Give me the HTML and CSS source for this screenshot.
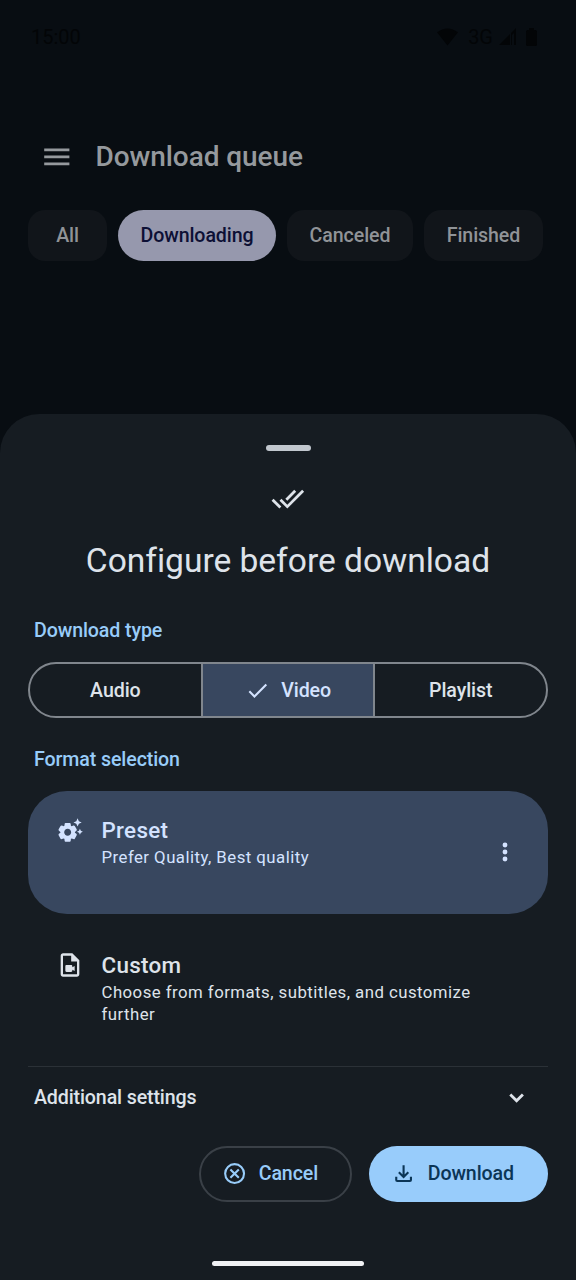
FILE: index.html
```html
<!DOCTYPE html>
<html lang="en">
<head>
<meta charset="utf-8">
<title>Download queue</title>
<link rel="stylesheet" href="styles.css">
</head>
<body>
<div class="screen">
  <div class="backdrop">
    <div class="status">
      <span>15:00</span>
      <div class="status-icons">
        <svg class="wifi" viewBox="0 0 22 18"><path d="M0 4Q11-4 22 4L11 18z"/></svg>
        <span class="network">3G</span>
        <svg class="signal" viewBox="0 0 17 17"><path d="M0 17 11 6v11zM12 5l5-5v17h-2V5l-2 2v10h-1z"/></svg>
        <svg class="battery" viewBox="0 0 11 18"><path d="M3 0h5v2h1.500Q11 2 11 3.500v13Q11 18 9.500 18h-8Q0 18 0 16.500v-13Q0 2 1.500 2H3z"/></svg>
      </div>
    </div>
    <header class="appbar">
      <svg class="icon24" viewBox="0 0 24 24"><path d="M3 18h18v-2H3v2zm0-5h18v-2H3v2zm0-7v2h18V6H3z"/></svg>
      <h1>Download queue</h1>
    </header>
    <nav class="chips">
      <span class="chip chip-all">All</span>
      <span class="chip chip-downloading selected">Downloading</span>
      <span class="chip chip-canceled">Canceled</span>
      <span class="chip chip-finished">Finished</span>
    </nav>
  </div>
  <main class="sheet">
    <div class="handle"></div>
    <svg class="icon24 done" viewBox="0 0 24 24"><path d="m18 7-1.410-1.410-6.340 6.340 1.410 1.410L18 7zm4.240-1.410L11.660 16.170 7.480 12l-1.410 1.410L11.660 19l12-12-1.420-1.410zM.41 13.410 6 19l1.410-1.410L1.830 12 .41 13.410z"/></svg>
    <h2>Configure before download</h2>
    <h3 class="label-type">Download type</h3>
    <div class="segments">
      <div class="segment">Audio</div>
      <div class="segment active"><svg class="icon18" viewBox="0 0 24 24"><path d="M9 16.170 4.830 12l-1.420 1.410L9 19 21 7l-1.410-1.410z"/></svg><span>Video</span></div>
      <div class="segment">Playlist</div>
    </div>
    <h3 class="label-format">Format selection</h3>
    <section class="option preset">
      <svg class="icon20" viewBox="0 0 24 24"><path d="M17.410 6.590 15 5.500l2.410-1.090L18.500 2l1.090 2.410L22 5.500l-2.410 1.090L18.500 9zM21.280 12.720 20.500 11l-.78 1.720-1.720.78 1.720.78.78 1.720.78-1.720L23 13.500zM16.240 14.370l1.230.93c.4.3.51.86.26 1.300l-1.620 2.800c-.25.44-.79.62-1.250.42l-1.430-.6c-.2.13-.42.26-.64.37l-.19 1.540c-.06.5-.49.88-.99.88H8.380c-.5 0-.93-.38-.99-.88l-.19-1.540c-.22-.11-.43-.23-.64-.37l-1.430.6c-.46.2-1 .02-1.250-.42l-1.620-2.800c-.25-.44-.14-.99.26-1.300l1.230-.93V14c0-.12 0-.25.01-.37L2.530 12.700c-.4-.3-.51-.86-.26-1.300l1.620-2.800c.25-.44.79-.62 1.250-.42l1.430.6c.2-.13.42-.26.64-.37l.19-1.540C7.450 6.380 7.880 6 8.380 6h3.230c.5 0 .93.38.99.88l.19 1.540c.22.11.43.23.64.37l1.430-.6c.46-.2 1-.02 1.250.42l1.620 2.800c.25.44.14.99-.26 1.300l-1.230.93c.01.12.01.24.01.37s0 .24-.01.36zM13 14c0-1.660-1.340-3-3-3s-3 1.340-3 3 1.340 3 3 3 3-1.340 3-3z"/></svg>
      <div class="option-text"><h4>Preset</h4><p>Prefer Quality, Best quality</p></div>
      <svg class="icon20 more" viewBox="0 0 24 24"><circle cx="12" cy="6" r="2.100"/><circle cx="12" cy="12" r="2.100"/><circle cx="12" cy="18" r="2.100"/></svg>
    </section>
    <section class="option custom">
      <svg class="icon20" viewBox="0 0 24 24"><path d="M14 2H6.010c-1.100 0-2 .89-2 2L4 20c0 1.110.89 2 1.990 2H18c1.100 0 2-.9 2-2V8l-6-6zM6 4h7v5h5v11H6V4zm8 10 2-1.060v4.120L14 16v1c0 .55-.45 1-1 1H9c-.55 0-1-.45-1-1v-4c0-.55.45-1 1-1h4c.55 0 1 .45 1 1v1z"/></svg>
      <div class="option-text"><h4>Custom</h4><p>Choose from formats, subtitles, and customize further</p></div>
    </section>
    <div class="additional">
      <span>Additional settings</span>
      <svg class="icon18" viewBox="0 0 24 24"><path class="stroke" d="m6 9 6 6 6-6"/></svg>
    </div>
    <div class="actions">
      <button class="cancel"><svg class="icon18" viewBox="0 0 24 24"><circle class="thin" cx="12" cy="12" r="9"/><path class="thin" d="m8 8 8 8m0-8-8 8"/></svg><span>Cancel</span></button>
      <button class="download"><svg class="icon18" viewBox="0 0 24 24"><path class="thin" d="M12 4v11M7.500 10.700 12 15.200l4.500-4.500M5 15v3q0 1 1 1h12q1 0 1-1v-3"/></svg><span>Download</span></button>
    </div>
    <div class="homebar"></div>
  </main>
</div>
</body>
</html>
```
FILE: styles.css
```css
* { box-sizing: border-box; margin: 0; }
body { background: #080d12; font-family: Roboto, sans-serif; }
svg { display: block; fill: currentColor; flex: none; }
h1, h2, h3, h4, p { font-weight: 400; }
.screen { width: 576px; height: 1280px; overflow: hidden; display: flex; flex-direction: column; }
.backdrop { height: 414px; flex: none; }
.status { display: flex; justify-content: space-between; align-items: center; height: 73px; padding: 0 39px 0 31px; color: #030507; font-size: 20px; font-weight: 400; }
.status-icons { display: flex; align-items: center; }
.network { margin: 0 6px 0 10px; }
.wifi { width: 21px; height: 18px; }
.signal { width: 17px; height: 17px; }
.battery { width: 11px; height: 18px; margin-left: 10px; }
.appbar { display: flex; align-items: center; height: 50px; margin: 59px 0 28px; padding: 0 39.500px; gap: 22.500px; color: #95999d; }
.appbar h1 { font-size: 28px; font-weight: 500; line-height: 40px; letter-spacing: -.08px; }
.icon24 { width: 33.600px; height: 33.600px; }
.icon20 { width: 28px; height: 28px; }
.icon18 { width: 25.200px; height: 25.200px; }
.chips { display: flex; gap: 11px; padding-left: 28px; }
.chip { display: flex; align-items: center; justify-content: center; height: 51px; border-radius: 17px; background: #11151a; color: #909397; font-size: 19.600px; font-weight: 500; letter-spacing: -.09px; }
.chip.selected { background: #9698ad; color: #0d1035; border-radius: 26px; }
.chip-all { width: 79px; }
.chip-downloading { width: 158px; }
.chip-canceled { width: 126px; }
.chip-finished { width: 119px; }
.sheet { display: flex; flex-direction: column; flex: 1; padding: 31px 28px 0; background: #161c22; border-radius: 39px 39px 0 0; color: #dee3ea; }
.handle { width: 45px; height: 6px; border-radius: 3px; background: #c1c7ce; align-self: center; flex: none; }
.done { align-self: center; margin-top: 31px; }
h2 { font-size: 33.600px; line-height: 45px; text-align: center; margin-top: 22px; letter-spacing: -.03px; }
h3 { padding-left: 6px; font-size: 19.600px; line-height: 28px; font-weight: 500; letter-spacing: -.1px; color: #98ccf9; }
.label-type { margin-top: 34.400px; }
.segments { display: flex; height: 56px; margin-top: 17px; border: 2px solid #80868d; border-radius: 28px; overflow: hidden; flex: none; }
.segment { display: flex; flex: 1; align-items: center; justify-content: center; gap: 11px; padding-top: 1px; font-size: 19.600px; font-weight: 500; letter-spacing: -.09px; }
.segment.active { background: #38475f; color: #d4e3ff; border: solid #80868d; border-width: 0 2px; }
.label-format { margin-top: 28px; }
.option { display: flex; flex: none; padding: 0 28px; }
.option-text { flex: 1; margin-left: 17.500px; }
h4 { font-size: 22.400px; line-height: 28px; font-weight: 500; letter-spacing: .3px; }
p { margin-top: 2px; font-size: 16.800px; line-height: 22.400px; letter-spacing: .46px; }
.preset { height: 123px; margin-top: 17px; padding-top: 25px; padding-right: 29px; border-radius: 39px; background: #38475f; color: #d4e3ff; }
.more { margin-top: 22.500px; }
.custom { height: 153px; padding-top: 37px; border-bottom: 1px solid #2b3137; }
.additional { display: flex; align-items: center; justify-content: space-between; height: 62px; flex: none; padding: 0 18.500px 0 6px; font-size: 19.600px; font-weight: 500; letter-spacing: -.12px; }
.stroke { fill: none; stroke: currentColor; stroke-width: 2.700; }
.thin { fill: none; stroke: currentColor; stroke-width: 2; }
.actions { display: flex; justify-content: flex-end; gap: 17px; margin-top: 17px; }
button { display: flex; align-items: center; height: 56px; border: 0; padding: 0 0 0 22px; border-radius: 28px; gap: 11.500px; font: 500 19.600px Roboto, sans-serif; letter-spacing: -.09px; }
.cancel { width: 153px; background: none; border: 2px solid #3a4047; padding-left: 21px; color: #98ccf9; }
.download { width: 179px; background: #98ccfb; color: #0b3556; }
.homebar { width: 152px; height: 5px; border-radius: 3px; background: #f0f1f4; align-self: center; margin-top: 59px; flex: none; }
```
